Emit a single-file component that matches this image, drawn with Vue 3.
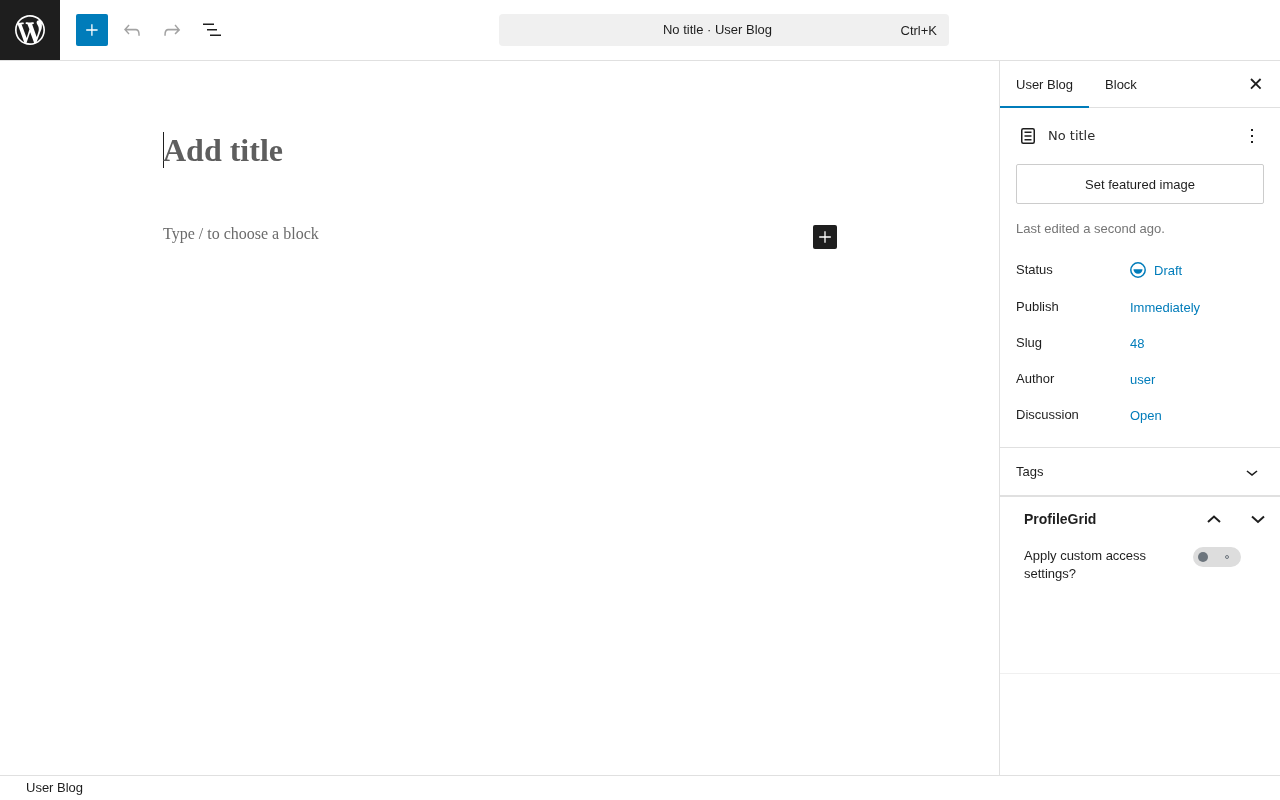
<script setup>
const rows = [
  { label: 'Status', value: 'Draft', draft: true },
  { label: 'Publish', value: 'Immediately' },
  { label: 'Slug', value: '48' },
  { label: 'Author', value: 'user' },
  { label: 'Discussion', value: 'Open' },
]
</script>

<template>
  <div class="page">
    <header class="topbar">
      <div class="logo">
        <svg width="36" height="36" viewBox="-2 -2 24 24" fill="#fff"><path d="M20 10c0-5.51-4.49-10-10-10C4.48 0 0 4.49 0 10c0 5.52 4.48 10 10 10 5.51 0 10-4.48 10-10zM7.78 15.37L4.37 6.22c.55-.02 1.17-.08 1.17-.08.5-.06.44-1.13-.06-1.11 0 0-1.45.11-2.37.11-.18 0-.37 0-.58-.01C4.12 2.69 6.87 1.11 10 1.11c2.33 0 4.45.87 6.05 2.34-.68-.11-1.65.39-1.65 1.58 0 .74.45 1.36.9 2.1.35.61.55 1.36.55 2.46 0 1.49-1.4 5-1.4 5l-3.03-8.37c.54-.02.82-.17.82-.17.5-.05.44-1.25-.06-1.22 0 0-1.44.12-2.38.12-.87 0-2.33-.12-2.33-.12-.5-.03-.56 1.2-.06 1.22l.92.08 1.26 3.41zM17.41 10c.24-.64.74-1.87.43-4.25.7 1.29 1.05 2.71 1.05 4.25 0 3.29-1.73 6.24-4.4 7.78.97-2.59 1.94-5.2 2.92-7.78zM6.1 18.09C3.12 16.65 1.11 13.53 1.11 10c0-1.3.23-2.48.72-3.59C3.25 10.3 4.67 14.2 6.1 18.09zm4.03-6.63l2.58 6.98c-.86.29-1.76.45-2.71.45-.79 0-1.57-.11-2.29-.33.81-2.38 1.62-4.74 2.42-7.1z"/></svg>
      </div>
      <div class="tools">
        <button class="add" aria-label="Add block">
          <svg width="24" height="24" viewBox="0 0 24 24" fill="none" stroke="#fff" stroke-width="1.300"><path d="M6.200 12h11.400M11.900 6.200v11.500"/></svg>
        </button>
        <button class="tool" aria-label="Undo">
          <svg width="24" height="24" viewBox="0 0 24 24" fill="#a3a3a3"><path d="M18.300 11.700c-.6-.6-1.400-.9-2.300-.9H6.700l2.900-3.300-1.100-1-4.500 5L8.500 16.500l1-1-2.700-3.100H16c.5 0 .9.200 1.300.5 1 1 1 3.400 1 4.500v.3h1.500v-.2c0-1.500 0-4.300-1.500-5.800z"/></svg>
        </button>
        <button class="tool" aria-label="Redo">
          <svg width="24" height="24" viewBox="0 0 24 24" fill="#a3a3a3"><path d="M15.600 6.500l-1.100 1 2.900 3.300H8c-.9 0-1.700.3-2.300.9-1.400 1.500-1.400 4.200-1.400 5.800v.2h1.500v-.3c0-1.100 0-3.500 1-4.500.3-.3.7-.5 1.300-.5h9.200L14.500 15.500l1.100 1.100 4.600-4.600-4.600-5.500z"/></svg>
        </button>
        <button class="tool" aria-label="List view">
          <svg width="24" height="24" viewBox="0 0 24 24" fill="none" stroke="#1e1e1e" stroke-width="1.5"><path d="M3 6.250h11M7 11.750h10M10 17.250h11"/></svg>
        </button>
      </div>
      <div class="command">
        <span class="command-title">No title · User Blog</span>
        <span class="shortcut">Ctrl+K</span>
      </div>
      <div class="spacer"></div>
    </header>

    <div class="body">
      <main class="editor">
        <div class="column">
          <h1 class="title"><span class="caret">Add title</span></h1>
          <div class="block-row">
            <p class="placeholder">Type / to choose a block</p>
            <button class="inline-add" aria-label="Add block">
              <svg width="24" height="24" viewBox="0 0 24 24" fill="none" stroke="#fff" stroke-width="1.300"><path d="M6.200 12h11.600M12 6.200v11.600"/></svg>
            </button>
          </div>
        </div>
      </main>

      <aside class="sidebar">
        <div class="tabs">
          <div class="tab active">User Blog</div>
          <div class="tab">Block</div>
          <button class="close" aria-label="Close">
            <svg width="24" height="24" viewBox="0 0 24 24" fill="none" stroke="#1e1e1e" stroke-width="1.800"><path d="M7 7l9.600 9.600M16.600 7L7 16.600"/></svg>
          </button>
        </div>

        <section class="summary">
          <div class="doc-row">
            <svg class="doc-icon" width="24" height="24" viewBox="0 0 24 24" fill="none" stroke="#1e1e1e" stroke-width="1.500"><rect x="5.750" y="4.750" width="12.500" height="14.500" rx="1.500"/><path d="M8.500 8.250h7M8.500 12h7M8.500 15.750h7"/></svg>
            <span class="doc-title">No title</span>
            <svg class="kebab" width="24" height="24" viewBox="0 0 24 24" fill="#1e1e1e"><path d="M13 19h-2v-2h2v2zm0-6h-2v-2h2v2zm0-6h-2V5h2v2z"/></svg>
          </div>
          <button class="featured">Set featured image</button>
          <p class="edited">Last edited a second ago.</p>
          <div class="meta">
            <div v-for="row in rows" :key="row.label" class="meta-row" :class="{ first: row.draft }">
              <span class="meta-label">{{ row.label }}</span>
              <span class="meta-value">
                <svg v-if="row.draft" class="draft-icon" width="16" height="16" viewBox="0 0 16 16">
                  <circle cx="8" cy="8" r="7.200" fill="none" stroke="#007cba" stroke-width="1.500"/>
                  <path d="M3.500 7.300h9c0 2.600-2 4.500-4.500 4.500S3.500 9.900 3.500 7.300z" fill="#007cba"/>
                </svg>
                {{ row.value }}
              </span>
            </div>
          </div>
        </section>

        <section class="tags">
          <span>Tags</span>
          <svg width="24" height="24" viewBox="0 0 24 24" fill="#1e1e1e"><path d="M17.500 11.600L12 16l-5.500-4.400.9-1.200L12 14l4.500-3.600 1 1.200z"/></svg>
        </section>

        <section class="grid-panel">
          <div class="grid-head">
            <h2>ProfileGrid</h2>
            <div class="grid-arrows">
              <svg width="24" height="24" viewBox="0 0 24 24" fill="none" stroke="#1e1e1e" stroke-width="2"><path d="M6 15l6-5.500 6 5.500"/></svg>
              <svg width="24" height="24" viewBox="0 0 24 24" fill="none" stroke="#1e1e1e" stroke-width="2"><path d="M6 9.500l6 5.500 6-5.500"/></svg>
            </div>
          </div>
          <div class="access">
            <span class="access-label">Apply custom access settings?</span>
            <span class="toggle"><i class="knob"></i><i class="dot"></i></span>
          </div>
        </section>
      </aside>
    </div>

    <footer class="footer">User Blog</footer>
  </div>
</template>

<style>
html, body { margin: 0; background: #fff; }
</style>

<style scoped>
.page {
  width: 1280px;
  height: 800px;
  display: flex;
  flex-direction: column;
  font-family: "Liberation Sans", Arial, sans-serif;
  font-size: 13px;
  color: #1e1e1e;
  overflow: hidden;
  will-change: transform;
}
button { border: 0; background: none; padding: 0; margin: 0; font: inherit; color: inherit; display: flex; align-items: center; justify-content: center; }

.topbar { height: 60px; flex: none; display: flex; align-items: center; border-bottom: 1px solid #e0e0e0; box-sizing: content-box; }
.logo { width: 60px; height: 60px; background: #1e1e1e; display: flex; align-items: center; justify-content: center; flex: none; }
.tools { flex: 1; display: flex; align-items: center; padding-left: 16px; }
.add { width: 32px; height: 32px; background: #007cba; border-radius: 2px; margin-right: 4px; }
.tool { width: 40px; height: 32px; }
.command { width: 450px; height: 32px; flex: none; background: #f0f0f0; border-radius: 4px; display: flex; align-items: center; justify-content: center; padding: 0 13px 2px 0; box-sizing: border-box; position: relative; }
.shortcut { position: absolute; right: 12px; top: 9px; line-height: 15px; }
.spacer { width: 331px; flex: none; }

.body { flex: 1; display: flex; min-height: 0; }
.editor { flex: 1; display: flex; justify-content: center; min-width: 0; padding-left: 1px; }
.column { width: 674px; padding-top: 71px; }
.title { margin: 0; font: 700 32px/36px "Liberation Serif", "Times New Roman", serif; color: #5e5e5e; height: 36px; }
.caret { display: inline-block; box-shadow: inset 1px 0 0 #1e1e1e; height: 36px; }
.block-row { display: flex; justify-content: space-between; align-items: flex-start; margin-top: 57px; }
.placeholder { margin: 0; font: 16px/18px "Liberation Serif", "Times New Roman", serif; color: #6b6b6b; }
.inline-add { width: 24px; height: 24px; background: #1e1e1e; border-radius: 2px; }

.sidebar { width: 280px; flex: none; border-left: 1px solid #e0e0e0; display: flex; flex-direction: column; }
.tabs { height: 47px; flex: none; display: flex; align-items: stretch; border-bottom: 1px solid #e0e0e0; box-sizing: border-box; }
.tab { padding: 0 16px; display: flex; align-items: center; height: 47px; box-sizing: border-box; }
.tab.active { box-shadow: inset 0 -2px 0 #007cba; }
.close { margin-left: auto; width: 48px; height: 46px; }

.summary { padding: 16px 16px 0; height: 340px; box-sizing: border-box; border-bottom: 1px solid #e0e0e0; flex: none; }
.doc-row { display: flex; align-items: center; height: 24px; margin-bottom: 16px; }
.doc-icon { flex: none; }
.doc-title { margin: 0 0 2px 8px; font-family: "DejaVu Sans", sans-serif; color: #2c2c2c; }
.kebab { margin-left: auto; }
.featured { width: 248px; height: 40px; border: 1px solid #ccc; border-radius: 2px; box-sizing: border-box; }
.edited { margin: 17px 0 0; line-height: 15px; color: #757575; }
.meta { margin-top: 16px; }
.meta-row { display: flex; height: 36px; align-items: center; }
.meta-row.first { height: 37px; }
.meta-label { width: 114px; flex: none; position: relative; top: -1px; }
.meta-value { color: #007cba; display: flex; align-items: center; gap: 8px; }
.draft-icon { margin-top: -2px; }

.tags { height: 49px; flex: none; box-sizing: border-box; border-bottom: 2px solid #e0e0e0; display: flex; align-items: center; justify-content: space-between; padding: 0 16px; }

.grid-panel { height: 177px; flex: none; box-sizing: border-box; border-bottom: 1px solid #f0f0f0; padding: 0 0 0 24px; }
.grid-head { height: 44px; display: flex; align-items: center; justify-content: space-between; }
.grid-head h2 { margin: 0; font-size: 14px; font-weight: 700; }
.grid-arrows { display: flex; gap: 20px; margin-right: 10px; }
.access { display: flex; align-items: flex-start; padding-top: 6px; }
.access-label { width: 169px; line-height: 18px; }
.toggle { width: 48px; height: 20px; background: #ddd; border-radius: 10px; position: relative; }
.knob { position: absolute; left: 5px; top: 5px; width: 10px; height: 10px; border-radius: 50%; background: #6c757d; }
.dot { position: absolute; left: 32px; top: 8px; width: 4px; height: 4px; border-radius: 50%; border: 1px solid #6c757d; box-sizing: border-box; }

.footer { height: 24px; flex: none; border-top: 1px solid #e0e0e0; box-sizing: content-box; padding-left: 26px; line-height: 23px; }
</style>
